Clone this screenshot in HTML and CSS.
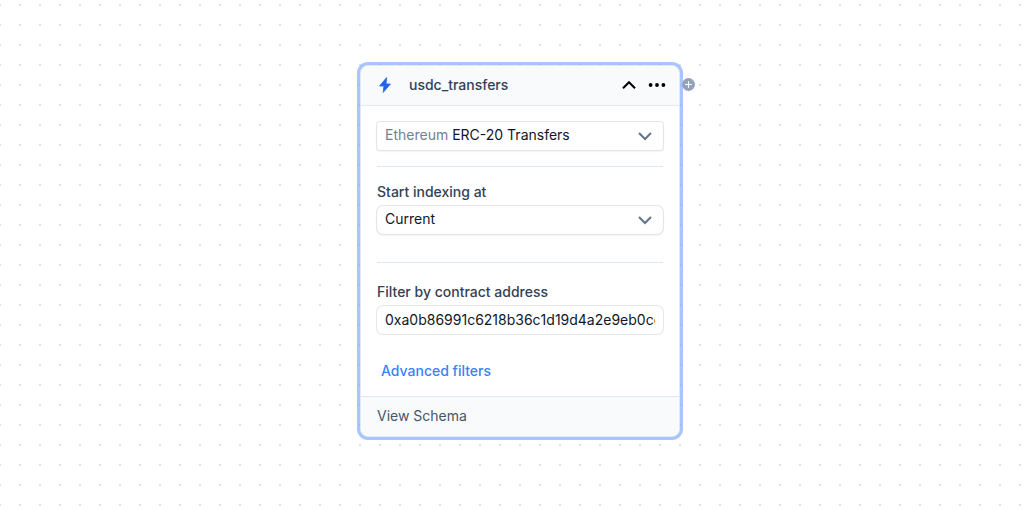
FILE: index.html
```html
<!DOCTYPE html>
<html lang="en">
<head>
<meta charset="utf-8">
<meta name="viewport" content="width=device-width, initial-scale=1">
<title>usdc_transfers</title>
<link rel="stylesheet" href="styles.css">
</head>
<body>
<main class="canvas">
  <section class="node" aria-labelledby="node-title">
    <header class="node-header">
      <svg class="bolt" viewBox="0 0 16 16" aria-hidden="true"><path d="M9.6 .6 2.6 9h4.3l-.7 6.4L13.4 7H9.1z" fill="#2563eb" stroke="#2563eb" stroke-width=".8" stroke-linejoin="round"/></svg>
      <h1 class="node-title" id="node-title">usdc_transfers</h1>
      <button class="icon-button" type="button" aria-label="Collapse">
        <svg viewBox="0 0 20 20" aria-hidden="true"><path d="M4 13.2 10 7.2l6 6" fill="none" stroke="#000" stroke-width="2"/></svg>
      </button>
      <button class="icon-button" type="button" aria-label="More options">
        <svg viewBox="0 0 20 20" aria-hidden="true"><circle cx="3.6" cy="10" r="1.9"/><circle cx="10" cy="10" r="1.9"/><circle cx="16.4" cy="10" r="1.9"/></svg>
      </button>
    </header>
    <div class="node-body">
      <div class="control">
        <label class="prefix" for="dataset">Ethereum</label>
        <select class="select" id="dataset"><option>ERC-20 Transfers</option></select>
        <svg class="chevron" viewBox="0 0 20 20" aria-hidden="true"><path d="m4 7 6 6 6-6"/></svg>
      </div>
      <hr class="divider">
      <div class="field">
        <label class="label" for="start">Start indexing at</label>
        <div class="control rounded">
          <select class="select" id="start"><option>Current</option></select>
          <svg class="chevron" viewBox="0 0 20 20" aria-hidden="true"><path d="m4 7 6 6 6-6"/></svg>
        </div>
      </div>
      <hr class="divider spaced">
      <div class="field">
        <label class="label" for="address">Filter by contract address</label>
        <div class="control rounded flat">
          <input class="input" id="address" type="text" value="0xa0b86991c6218b36c1d19d4a2e9eb0ce3606eb48">
        </div>
      </div>
      <button class="advanced" type="button">Advanced filters</button>
    </div>
    <footer class="node-footer"><a class="schema" href="#schema">View Schema</a></footer>
    <button class="handle" type="button" aria-label="Add connection">
      <svg viewBox="0 0 12 12" aria-hidden="true"><path d="M6 3v6M3 6h6" stroke="#fff" stroke-width="1"/></svg>
    </button>
  </section>
</main>
</body>
</html>
```
FILE: styles.css
```css
* { box-sizing: border-box; }

body {
  margin: 0;
  font-family: Inter, "Liberation Sans", sans-serif;
  font-size: 14px;
  line-height: 20px;
  color: #0f172a;
}

button, select, input {
  margin: 0;
  padding: 0;
  border: 0;
  background: none;
  font: inherit;
  color: inherit;
}

.canvas {
  display: flex;
  justify-content: center;
  align-items: flex-start;
  min-height: 100vh;
  padding: 65px 0 65px 8px;
  background: conic-gradient(from 90deg at 18px 18px, #e2e2e2 90deg, #fff 0) -19px -14px / 20px 20px;
}

.node {
  position: relative;
  width: 320px;
  border: 1px solid #e2e8f0;
  border-radius: 8px;
  background: #fff;
  box-shadow: 0 0 0 3px rgba(96, 150, 255, .55);
}

.node-header {
  display: flex;
  align-items: center;
  height: 40px;
  padding: 0 12px 2px 16px;
  border-bottom: 1px solid #e2e8f0;
  border-radius: 7px 7px 0 0;
  background: #f8fafc;
}

.bolt { width: 16px; height: 16px; }

.node-title {
  flex: 1;
  margin: 0 0 0 16px;
  font-size: 14px;
  font-weight: 500;
  color: #334155;
}

.icon-button { width: 20px; height: 20px; margin-left: 8px; }

.icon-button svg { display: block; width: 20px; height: 20px; }

.node-body {
  display: flex;
  flex-direction: column;
  padding: 16px 16px 15px;
}

.control {
  display: flex;
  align-items: center;
  gap: 4px;
  height: 28px;
  padding: 0 8px;
  border-radius: 3px;
  background: #fff;
  box-shadow: 0 0 0 1px #e2e4e8, 0 1px 2px rgba(0, 0, 0, .15);
}

.rounded { border-radius: 6px; }

.flat { box-shadow: 0 0 0 1px #e5e7eb; }

.prefix { color: #718096; }

.prefix, .select, .input {
  height: 28px;
  padding-bottom: 2px;
  line-height: 26px;
}

.select {
  flex: 1;
  min-width: 0;
  appearance: none;
}

.chevron {
  width: 20px;
  height: 20px;
  fill: none;
  stroke: #64748b;
  stroke-width: 2;
  pointer-events: none;
}

.divider {
  width: 100%;
  height: 1px;
  margin: 16px 0 15px;
  border: 0;
  background: #e2e8f0;
}

.spaced { margin: 28px 0 19px; }

.field { display: flex; flex-direction: column; gap: 4px; }

.label { font-weight: 500; color: #334155; }

.input { width: 100%; font-kerning: none; font-variant-ligatures: none; }

.advanced {
  align-self: flex-start;
  margin-top: 27px;
  padding: 0 4px;
  font-weight: 500;
  color: #3b82f6;
}

.node-footer {
  height: 40px;
  padding: 9px 16px;
  border-top: 1px solid #e2e8f0;
  border-radius: 0 0 7px 7px;
  background: #f8fafc;
}

.schema { color: #475569; text-decoration: none; }

/* Connection handle overlapping the right edge */
.handle {
  position: absolute;
  top: 12px;
  right: -16px;
  width: 13px;
  height: 13px;
  border-radius: 50%;
  background: #94a3b8;
}

.handle svg { display: block; width: 13px; height: 13px; }
```
